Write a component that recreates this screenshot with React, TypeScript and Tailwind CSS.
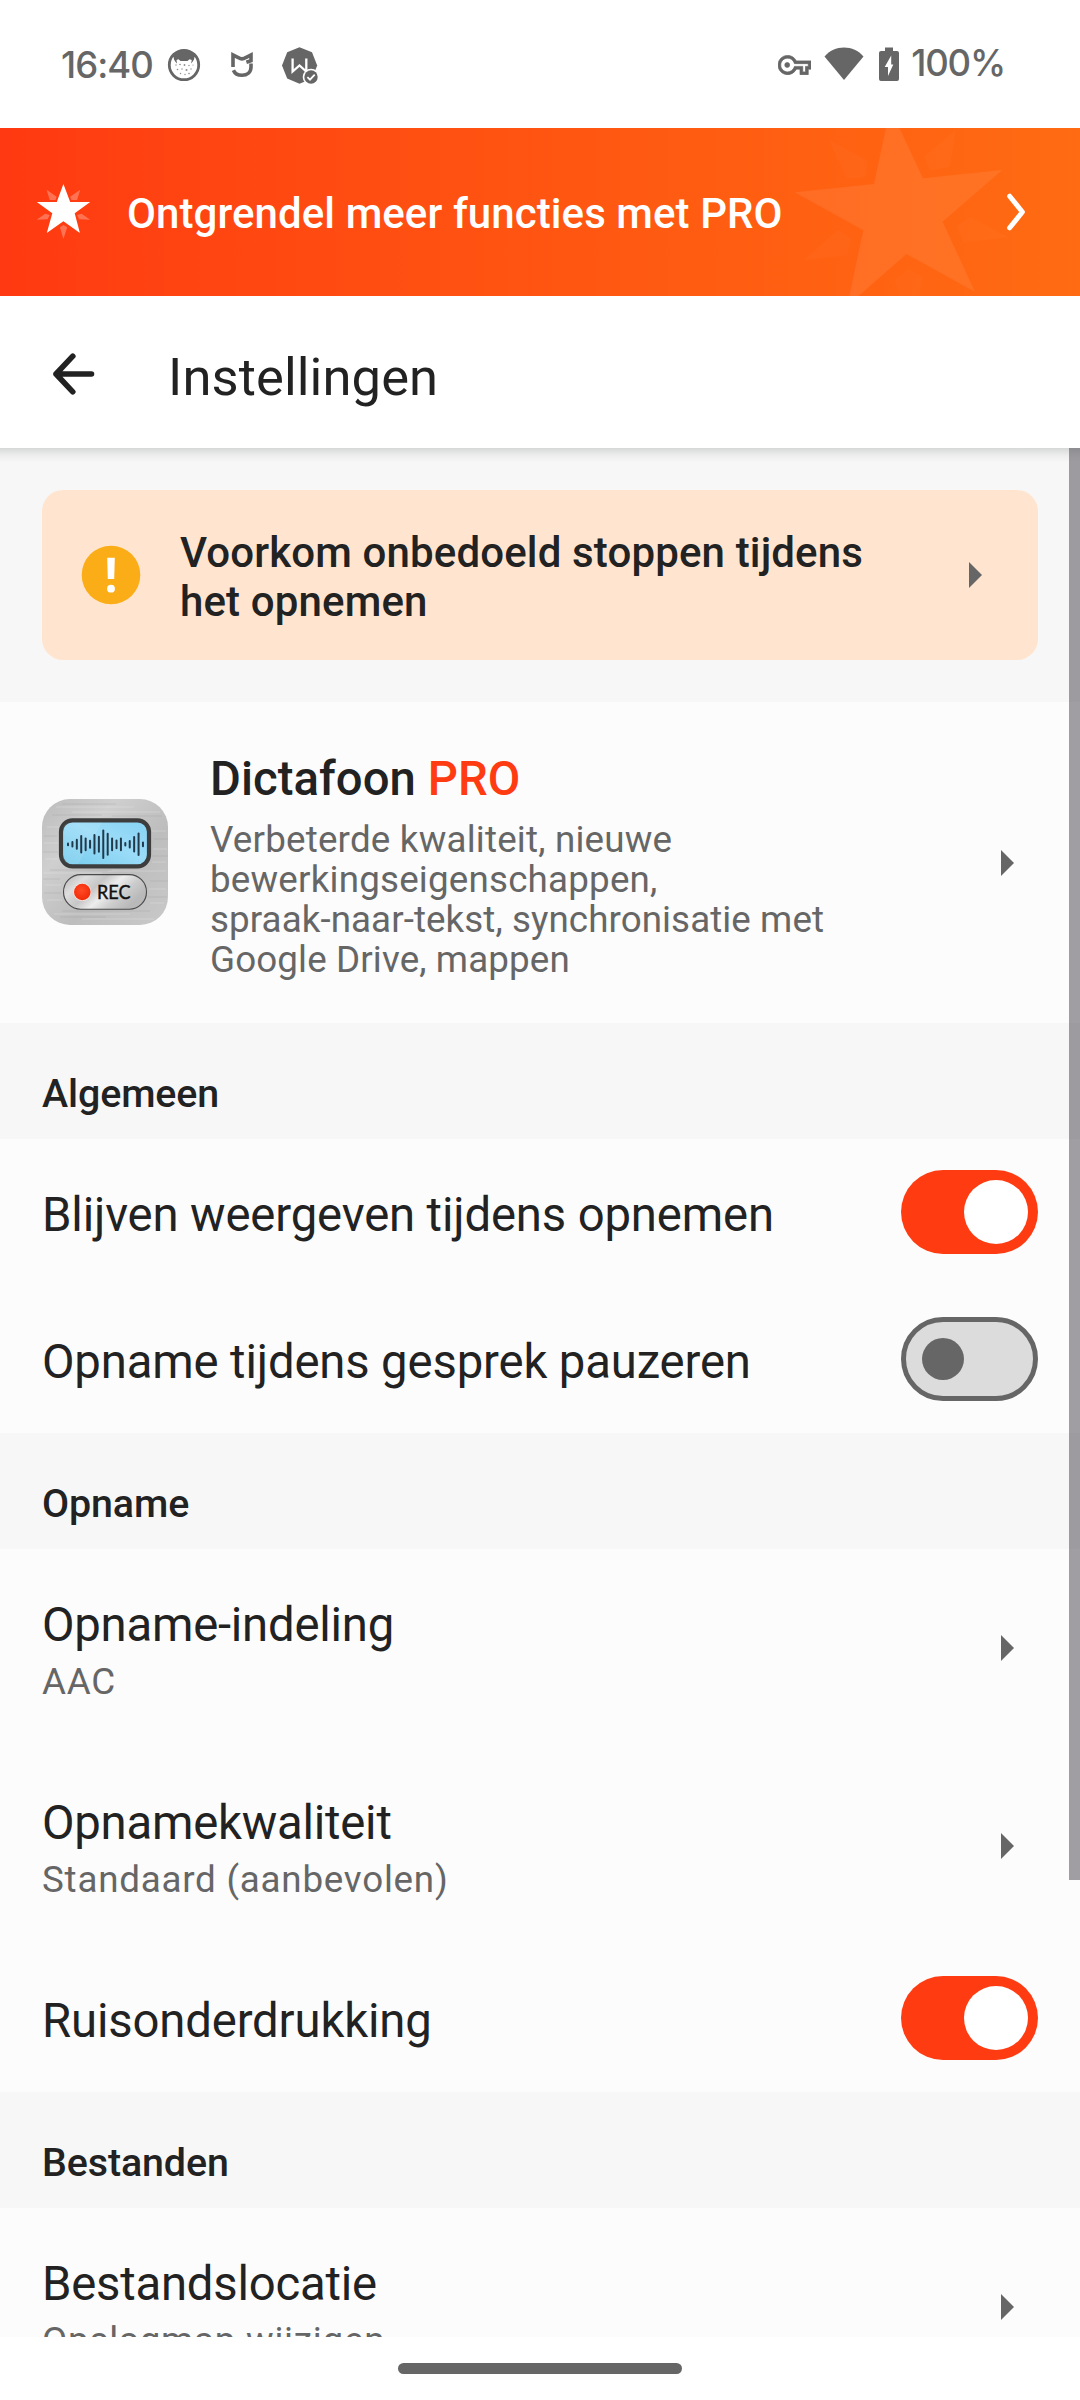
import React from 'react';

function StatusBar() {
  return (
    <header className="flex h-32 shrink-0 items-center bg-white pt-0.5 text-[#666666]">
      <span className="ml-[61px] w-[107px] whitespace-nowrap font-[Inter] text-[36.5px] font-medium leading-none tracking-[-1px]">
        16:40
      </span>
      <svg width="34" height="36" viewBox="0 0 34 36" className="-ml-px shrink-0" fill="none">
        <circle cx="17" cy="18" r="14.700" stroke="currentColor" strokeWidth="2.800" />
        <path
          d="M5 9.500C8 5 12.500 2.800 17 2.800S26 5 29 9.500L27.500 10 27 12.500 25.400 15 24 16.500 24.800 13 22.500 12.200 20.500 14H13.500L11.500 12.200 9.500 13 10 16.500 8.600 15 7 12.500 6.500 10Z"
          fill="currentColor"
        />
        <g fill="currentColor" opacity="0.75">
          <circle cx="9" cy="18" r="0.7" />
          <circle cx="13" cy="17.500" r="0.8" />
          <circle cx="17.500" cy="18" r="0.9" />
          <circle cx="22" cy="18.500" r="0.7" />
          <circle cx="26" cy="18" r="0.6" />
          <circle cx="10.500" cy="22.500" r="0.8" />
          <circle cx="15" cy="22" r="0.7" />
          <circle cx="19.500" cy="23" r="1" />
          <circle cx="24" cy="22" r="0.7" />
          <circle cx="13.500" cy="26.500" r="0.7" />
          <circle cx="18" cy="27.500" r="0.7" />
          <circle cx="22" cy="26.500" r="0.8" />
        </g>
      </svg>
      <svg width="24" height="36" viewBox="0 0 24 36" className="ml-[29px] shrink-0" fill="none">
        <path d="M3 20V8L8.200 10.600Q12 13 15.800 10.600L21 8V13.600L16.400 15.200" stroke="currentColor" strokeWidth="3.600" strokeLinejoin="miter" />
        <path d="M21 16.500V20C21 25.500 17 28.300 12 28.300C7.800 28.300 4.800 26.500 3.400 23.200" stroke="currentColor" strokeWidth="3.600" />
      </svg>
      <svg width="38" height="38" viewBox="0 0 38 38" className="ml-[27px] shrink-0" fill="none">
        <path d="M18.500 1.200 31 6.200 36.200 19.500 31 32.500 18.500 37.800 6.200 32.500 1 19.500 6.200 6.200Z" fill="currentColor" />
        <path d="M11.600 12.500V25.500L18.500 19.500 25.300 25.500V12.500" stroke="#ffffff" strokeWidth="2.300" />
        <circle cx="30" cy="31" r="8.300" fill="#ffffff" />
        <circle cx="30" cy="31" r="6.700" fill="currentColor" />
        <path d="M26.400 31.200 29 33.700 33.700 28.600" stroke="#ffffff" strokeWidth="1.800" />
      </svg>

      <svg width="33" height="20" viewBox="0 4.750 24 14.500" className="ml-auto shrink-0" fill="currentColor" stroke="currentColor" strokeWidth="0.500">
        <path d="M22 19h-6v-4h-2.680c-1.140 2.420-3.600 4-6.320 4-3.860 0-7-3.140-7-7s3.140-7 7-7c2.720 0 5.170 1.580 6.320 4H24v6h-2v4zm-4-2h2v-4h2v-2H11.940l-.23-.67C11.010 8.340 9.110 7 7 7c-2.760 0-5 2.240-5 5s2.240 5 5 5c2.110 0 4.010-1.340 4.710-3.330l.23-.67H18v4z" />
        <circle cx="6.700" cy="12" r="1.800" />
      </svg>
      <svg width="40" height="36" viewBox="0 0 40 36" className="ml-[13px] shrink-0" fill="currentColor">
        <path d="M0.500 9.500C5.500 3.500 12.500 0.500 20 0.500S34.500 3.500 39.500 9.500L20 33Z" />
      </svg>
      <svg width="20" height="36" viewBox="0 0 20 36" className="ml-[15px] shrink-0">
        <path d="M6 0.500H14V4H18A2 2 0 0 1 20 6V32A2 2 0 0 1 18 34H2A2 2 0 0 1 0 32V6A2 2 0 0 1 2 4H6Z" fill="currentColor" />
        <path d="M12.200 8.500 5.700 20H9V29L14.300 17.500H12.200Z" fill="#ffffff" />
      </svg>
      <span className="ml-3 mr-[75px] whitespace-nowrap pb-[3px] font-[Inter] text-[36.500px] font-medium leading-none tracking-[-1.2px]">
        100%
      </span>
    </header>
  );
}

function ProBanner() {
  return (
    <section className="relative flex h-[168px] shrink-0 items-center overflow-hidden bg-linear-to-r from-[#ff3911] to-[#ff6b12]">
      <svg width="232" height="168" viewBox="0 0 232 168" className="absolute left-[780px] top-0" fill="#ffffff">
        <path
          opacity="0.08"
          d="M110.200-19.700 142.900 50.300 222.100 42 162.500 93.700 194.900 163.700 126.400 126 67.200 178 83.300 102.300 14.800 64.300 94 56Z"
        />
        <path
          opacity="0.022"
          d="M49.300 12 87.800 33 85.100 49.300 66.800 50.700ZM176 2 169.800 38.700 150.200 42.700 144.300 28ZM228.300 109.300 183.600 114.700 176.700 98 190.400 88.700ZM23.400 132.300 67.200 127.300 71 110.300 57.900 102ZM120.500 168 114.700 152.700 127.800 141.300 143.300 148.700 139.500 168Z"
        />
      </svg>
      <svg width="56" height="58" viewBox="0 0 56 58" className="ml-9 shrink-0" fill="#ffffff">
        <path d="M27.400 1 34.200 19H54.200L38.700 30.300 43.900 50 27.400 38.300 10.800 50 16.300 30.300.8 19H20.800Z" />
        <path
          opacity="0.28"
          d="M27.400 56 23.900 44.300 27.400 42 31.200 44.300ZM54.200 36.700 43.200 36.300 41.100 32 45.600 30.700ZM.6 36.700 11.600 36.300 13.700 32 9.200 30.700ZM44.200 6.700 41.100 17H35.300L34.200 13.700ZM10.600 6.700 13.700 17H19.500L20.600 13.700Z"
        />
      </svg>
      <p className="ml-[35px] whitespace-nowrap pt-[3px] text-[42px] font-medium leading-none tracking-[0.08px] text-white">
        Ontgrendel meer functies met PRO
      </p>
      <svg width="20" height="38" viewBox="0 0 20 38" className="ml-auto mr-[54px] shrink-0" fill="none">
        <path d="M3.700 3.200 16.400 19 3.700 34.800" stroke="#ffffff" strokeWidth="5" strokeLinecap="round" strokeLinejoin="round" />
      </svg>
    </section>
  );
}

function AppBar() {
  return (
    <div className="flex h-[152px] shrink-0 items-center bg-white">
      <svg width="42" height="42" viewBox="0 0 42 42" className="ml-[53px] mt-1 shrink-0" fill="none">
        <path d="M38.500 21H3M19.800 3.200 3 21 19.800 38.800" stroke="#222222" strokeWidth="5.600" strokeLinecap="round" strokeLinejoin="round" />
      </svg>
      <h1 className="ml-[73px] pt-2.5 text-[52.5px] leading-none tracking-[0.1px]">Instellingen</h1>
    </div>
  );
}

function Arrow() {
  return (
    <svg width="13" height="26" viewBox="0 0 13 26" className="shrink-0" fill="#666666">
      <path d="M0 0 13 13 0 26Z" />
    </svg>
  );
}

function SectionHeader({ title }: { title: string }) {
  return (
    <h2 className="flex h-[116px] shrink-0 items-center bg-[#f7f7f7] pl-[42px] pt-[25px] text-[39.375px] font-medium leading-none tracking-[-0.1px]">
      {title}
    </h2>
  );
}

function Switch({ on }: { on: boolean }) {
  return on ? (
    <span className="mb-px flex h-[84px] w-[137px] shrink-0 items-center justify-end rounded-full bg-[#ff3b12] pr-[10px]">
      <span className="size-[64px] rounded-full bg-white" />
    </span>
  ) : (
    <span className="mb-px flex h-[84px] w-[137px] shrink-0 items-center rounded-full border-[5px] border-[#666666] bg-[#dcdcdc] pl-4">
      <span className="size-[42px] rounded-full bg-[#666666]" />
    </span>
  );
}

function SwitchRow({ title, on }: { title: string; on: boolean }) {
  return (
    <div className="flex h-[147px] shrink-0 items-center justify-between pl-[42px] pr-[42px]">
      <span className="whitespace-nowrap pt-[7px] text-[47.25px] leading-none tracking-[-0.14px]">{title}</span>
      <Switch on={on} />
    </div>
  );
}

function LinkRow({ title, value }: { title: string; value: string }) {
  return (
    <div className="flex h-[198px] shrink-0 items-center justify-between pl-[42px] pr-[66px]">
      <div className="whitespace-nowrap pt-0.5">
        <p className="text-[47.25px] leading-[60px] tracking-[-0.22px]">{title}</p>
        <p className="mt-[5px] text-[36.75px] leading-[44px] tracking-[0.77px] text-[#666666]">{value}</p>
      </div>
      <Arrow />
    </div>
  );
}

const WAVE = [1.7, 3, 5.3, 9, 6.7, 4.3, 10, 8.3, 14.6, 11.3, 6.7, 4.7, 6.7, 2, 4, 8, 11.6, 2.7];

function RecorderIcon() {
  return (
    <svg width="126" height="126" viewBox="0 0 126 126" className="mb-px shrink-0">
      <defs>
        <linearGradient id="metal" x1="0" y1="0" x2="1" y2="1">
          <stop offset="0" stopColor="#bcbcbc" />
          <stop offset="0.3" stopColor="#cfcfcf" />
          <stop offset="0.6" stopColor="#bdbdbd" />
          <stop offset="1" stopColor="#c9c9c9" />
        </linearGradient>
        <linearGradient id="screen" x1="0" y1="1" x2="1" y2="0">
          <stop offset="0" stopColor="#74cbec" />
          <stop offset="0.55" stopColor="#9bdcf8" />
          <stop offset="1" stopColor="#86d2f3" />
        </linearGradient>
        <linearGradient id="button" x1="0" y1="0" x2="1" y2="0.45">
          <stop offset="0" stopColor="#b5b5b5" />
          <stop offset="0.25" stopColor="#dedede" />
          <stop offset="0.45" stopColor="#c6c6c6" />
          <stop offset="0.62" stopColor="#ededed" />
          <stop offset="0.8" stopColor="#cdcdcd" />
          <stop offset="1" stopColor="#b9b9b9" />
        </linearGradient>
        <radialGradient id="dot" cx="0.45" cy="0.4" r="0.6">
          <stop offset="0" stopColor="#ff4a26" />
          <stop offset="1" stopColor="#f22a08" />
        </radialGradient>
      </defs>
      <rect width="126" height="126" rx="28" fill="url(#metal)" />
      <g stroke="#ffffff" strokeWidth="0.8" opacity="0.28">
        <path d="M14 8H92M30 13H118M5 28H17M110 32H124M2 44H16M111 50H125M3 60H16M110 63H124M2 74H60M66 72H124M3 86H19M107 90H124M5 101H20M108 104H122M12 115H88M40 120H112" />
      </g>
      <g stroke="#8c8c8c" strokeWidth="0.7" opacity="0.3">
        <path d="M20 5H74M10 16H60M70 17H120M2 37H15M112 40H126M1 53H16M110 57H126M8 71H70M1 80H18M108 82H126M2 94H19M106 98H125M20 112H108M18 118H64" />
      </g>
      <rect x="19" y="21.300" width="88" height="46" rx="11.500" fill="url(#screen)" stroke="#3d3d3d" strokeWidth="4.200" />
      <path d="M21 31Q21 24 28 23.400H60L36 65H28Q21 64 21 57Z" fill="#ffffff" opacity="0.1" />
      <g stroke="#203a4c" strokeWidth="2" strokeLinecap="round">
        {WAVE.map((h, i) => (
          <line key={i} x1={26 + i * 4.41} x2={26 + i * 4.41} y1={45.3 - h + 0.8} y2={45.3 + h - 0.8} />
        ))}
      </g>
      <rect x="21.500" y="75.600" width="83" height="34.600" rx="17.300" fill="url(#button)" stroke="#4a4a4a" strokeWidth="1.100" />
      <circle cx="40.300" cy="93" r="9.100" fill="#f6e4df" />
      <circle cx="40.300" cy="93" r="8.300" fill="url(#dot)" />
      <text x="55" y="99.800" fontFamily="Lato" fontSize="18.500" fontWeight="400" fill="#111111" stroke="#111111" strokeWidth="0.400" textLength="33.500" lengthAdjust="spacingAndGlyphs">
        REC
      </text>
    </svg>
  );
}

export default function App() {
  return (
    <div className="flex h-[2400px] w-[1080px] flex-col overflow-hidden bg-white font-[Roboto,sans-serif] text-[#222222]">
      <StatusBar />
      <ProBanner />
      <AppBar />

      <main className="relative flex h-[1889px] shrink-0 flex-col overflow-hidden bg-[#fcfcfc]">
        <div className="absolute left-0 top-0 h-3.5 w-full bg-linear-to-b from-[#d6d8d8] via-[#ececec] to-[#f7f7f7]" />
        <div className="absolute right-0 top-0 z-10 h-[1432px] w-[11px] bg-[#433f47]/50" />

        <section className="shrink-0 bg-[#f7f7f7] px-[42px] pt-[42px] pb-[42px]">
          <div className="flex h-[170px] items-center rounded-[21px] bg-[#ffe5cf] pl-[39px] pr-[56px]">
            <svg width="60" height="60" viewBox="0 0 60 60" className="shrink-0">
              <circle cx="30" cy="30" r="29.300" fill="#fbad17" />
              <path d="M26.200 12.700H33.800L33.200 34H26.800Z" fill="#ffffff" />
              <circle cx="30" cy="43.700" r="3.900" fill="#ffffff" />
            </svg>
            <p className="ml-[39px] whitespace-nowrap pt-1 text-[42px] font-medium leading-[49px] tracking-[0.14px]">
              Voorkom onbedoeld stoppen tijdens
              <br />
              het opnemen
            </p>
            <div className="ml-auto">
              <Arrow />
            </div>
          </div>
        </section>

        <section className="flex h-[321px] shrink-0 items-center pl-[42px] pr-[66px]">
          <RecorderIcon />
          <div className="ml-[42px] whitespace-nowrap pt-[5px]">
            <p className="text-[47.25px] font-medium leading-[56px] tracking-[0.06px]">
              Dictafoon <span className="text-[#ff3b12]">PRO</span>
            </p>
            <p className="mt-[13px] text-[36.75px] leading-[40px] tracking-[0.2px] text-[#666666]">
              Verbeterde kwaliteit, nieuwe
              <br />
              bewerkingseigenschappen,
              <br />
              <span className="tracking-[0.08px]">spraak-naar-tekst, synchronisatie met</span>
              <br />
              <span className="tracking-[0.13px]">Google Drive, mappen</span>
            </p>
          </div>
          <div className="ml-auto">
            <Arrow />
          </div>
        </section>

        <SectionHeader title="Algemeen" />
        <SwitchRow title="Blijven weergeven tijdens opnemen" on />
        <SwitchRow title="Opname tijdens gesprek pauzeren" on={false} />

        <SectionHeader title="Opname" />
        <LinkRow title="Opname-indeling" value="AAC" />
        <LinkRow title="Opnamekwaliteit" value="Standaard (aanbevolen)" />
        <SwitchRow title="Ruisonderdrukking" on />

        <SectionHeader title="Bestanden" />
        <LinkRow title="Bestandslocatie" value="Opslagmap wijzigen" />
      </main>

      <footer className="flex h-[63px] shrink-0 justify-center bg-white pt-[26px]">
        <span className="h-[11px] w-[284px] rounded-full bg-[#666666]" />
      </footer>
    </div>
  );
}
